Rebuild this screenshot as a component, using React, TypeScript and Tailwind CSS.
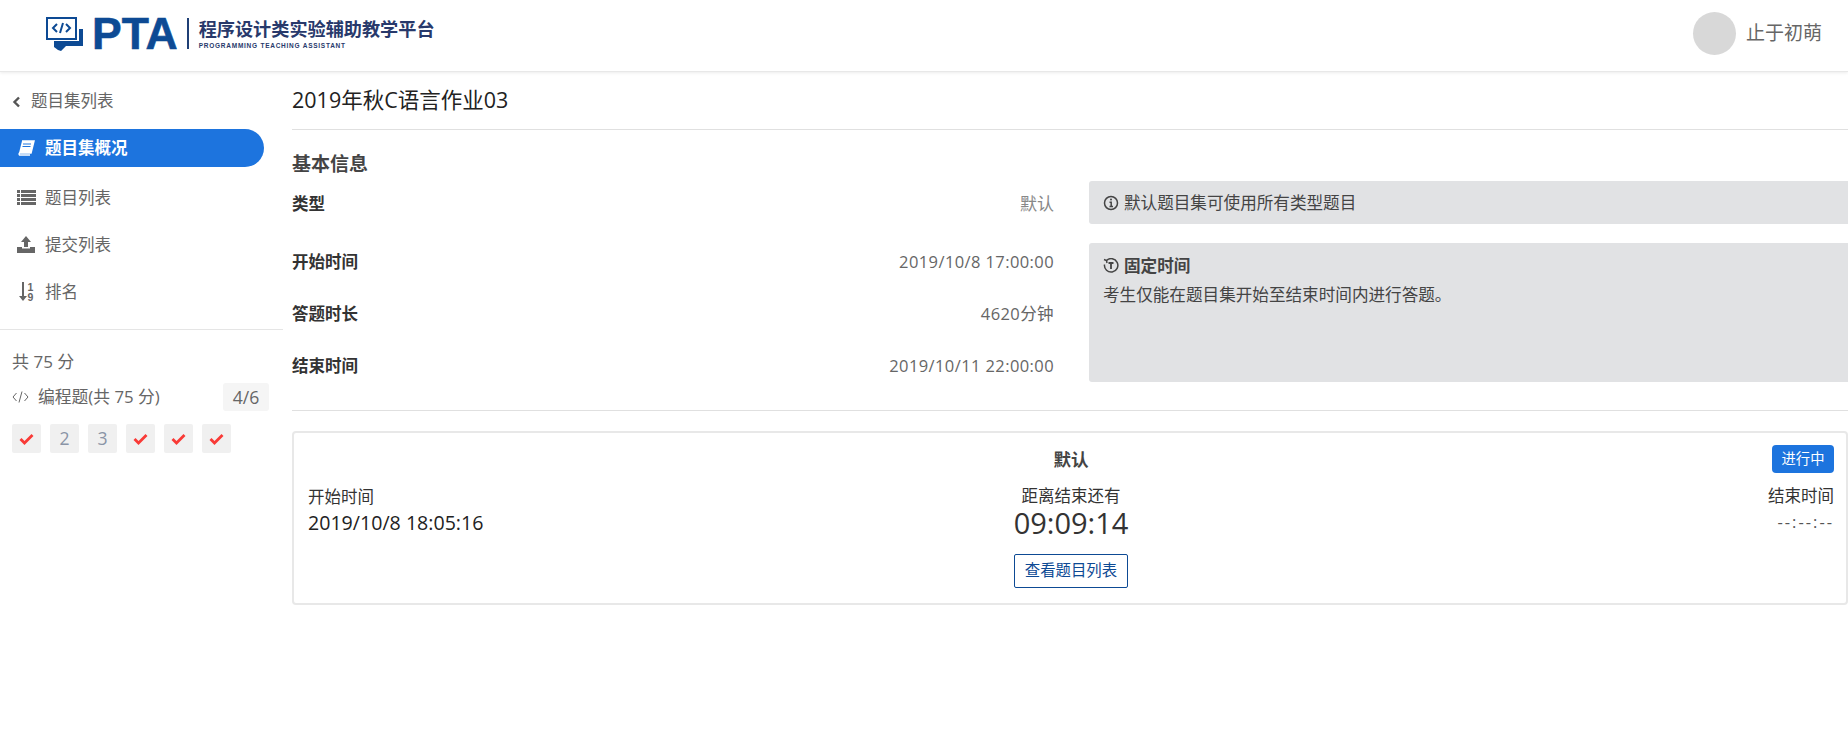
const font = "font-['Open_Sans','Noto_Sans_CJK_SC',sans-serif]";

function LogoMark() {
  return (
    <svg width="37" height="34" viewBox="0 0 37 34" className="shrink-0">
      <rect x="1" y="1" width="29" height="21" fill="#fff" stroke="#0d4a94" strokeWidth="2" />
      <path d="M11 7l-4 4 4 4M20 7l4 4-4 4M17 6l-3 10" fill="none" stroke="#0d4a94" strokeWidth="2" />
      <path d="M8 24h21l4 0V12h4v17H20l-5 5-3-1-4-3z" fill="#0d4a94" />
    </svg>
  );
}

function Logo() {
  return (
    <div className="flex items-center">
      <LogoMark />
      <span className="ml-[9px] font-['Liberation_Sans',sans-serif] text-[44.5px] leading-[34px] font-bold text-[#0d4a94] [-webkit-text-stroke:0.6px_#0d4a94]">
        PTA
      </span>
      <div className="ml-[9px] h-[31px] w-[2px] bg-[#1f3f75]" />
      <div className="ml-[10px] flex flex-col">
        <span className="text-[18.15px] leading-[24px] font-bold text-[#28396b]">程序设计类实验辅助教学平台</span>
        <span className="font-['Liberation_Sans',sans-serif] text-[6.5px] leading-[9px] font-bold tracking-[0.75px] text-[#28396b]">
          PROGRAMMING TEACHING ASSISTANT
        </span>
      </div>
    </div>
  );
}

function Header() {
  return (
    <header className="flex h-[72px] items-center justify-between border-b border-[#e8e8e8] pb-[4px] pl-[46px] pr-[26px] shadow-[0_1px_3px_rgba(0,0,0,0.08)]">
      <Logo />
      <div className="flex items-center gap-[10px]">
        <div className="h-[43px] w-[43px] rounded-full bg-[#d8d8d8]" />
        <span className="text-[19px] text-[#666]">止于初萌</span>
      </div>
    </header>
  );
}

function BackIcon() {
  return (
    <svg width="9" height="12" viewBox="0 0 9 12" className="mr-[10px]">
      <path d="M7 1.500L2.500 6 7 10.500" fill="none" stroke="#555" strokeWidth="2.400" />
    </svg>
  );
}

function BookIcon() {
  return (
    <svg width="18" height="16" viewBox="0 0 18 16">
      <path d="M5 1h12l-3 12H2.500a1.500 1.500 0 0 0 0 2H13" fill="none" stroke="#fff" strokeWidth="1.500" />
      <path d="M5 1h12l-3 12H2z" fill="#fff" />
      <path d="M6 4h8M5.500 6.500h8" stroke="#1d74de" strokeWidth="1" />
    </svg>
  );
}

function ListIcon() {
  return (
    <svg width="19" height="15" viewBox="0 0 19 15" fill="#666">
      <path d="M0 0h3v3H0zM4 0h15v3H4zM0 4h3v3H0zM4 4h15v3H4zM0 8h3v3H0zM4 8h15v3H4zM0 12h3v3H0zM4 12h15v3H4z" />
    </svg>
  );
}

function UploadIcon() {
  return (
    <svg width="18" height="17" viewBox="0 0 18 17" fill="#666">
      <path d="M9 0l5 6h-3v5H7V6H4z" />
      <path d="M0 11h5v1.500h8V11h5v6H0z" />
    </svg>
  );
}

function SortIcon() {
  return (
    <div className="flex items-center">
      <svg width="8" height="19" viewBox="0 0 8 19" fill="#666">
        <path d="M3 0h2v14h3l-4 5-4-5h3z" />
      </svg>
      <div className="ml-[1px] flex flex-col font-['Liberation_Sans',sans-serif] text-[10.5px] leading-[10px] font-bold text-[#666]">
        <span>1</span>
        <span>9</span>
      </div>
    </div>
  );
}

function CodeIcon() {
  return (
    <svg width="17" height="12" viewBox="0 0 17 12" fill="none" stroke="#666" strokeWidth="1">
      <path d="M4.500 2L1 6l3.500 4M12.500 2L16 6l-3.500 4M10 .5L7 11.500" />
    </svg>
  );
}

function TimeIcon() {
  return (
    <svg width="16" height="16" viewBox="0 0 16 16" fill="none" stroke="#444" strokeWidth="1.500">
      <path d="M3.500 2.500A6.700 6.700 0 1 1 1.500 6.500" />
      <path d="M1 1.500l2.500 1 .5 2.500" />
      <path d="M5.500 5h5M8 5v6" strokeWidth="1.800" />
    </svg>
  );
}

function InfoIcon() {
  return (
    <svg width="16" height="16" viewBox="0 0 16 16" fill="none" stroke="#444" strokeWidth="1.500">
      <circle cx="8" cy="8" r="6.500" />
      <path d="M6.500 7.200H8.200V11.500M6.500 11.500H10" />
      <circle cx="8" cy="4.600" r="1" fill="#444" stroke="none" />
    </svg>
  );
}

function CheckMark() {
  return (
    <svg width="15" height="12" viewBox="0 0 15 12">
      <path d="M1.500 6l4 4 8-8" fill="none" stroke="#f93a36" strokeWidth="2.800" />
    </svg>
  );
}

function NavItem({ icon, label }: { icon: React.ReactNode; label: string }) {
  return (
    <div className="flex h-[47px] items-center">
      <div className="flex w-[45px] justify-center pl-[7px]">{icon}</div>
      <span className="pt-[1px] text-[16.5px] text-[#666]">{label}</span>
    </div>
  );
}

function Sidebar() {
  const marks = ["check", "2", "3", "check", "check", "check"];
  return (
    <aside className="w-[283px] shrink-0">
      <div className="flex h-[57px] items-center pl-[12px] pt-[2px] text-[16.5px] text-[#666]">
        <BackIcon />
        <span>题目集列表</span>
      </div>
      <div className="flex h-[38px] w-[264px] items-center rounded-r-[19px] bg-[#1d74de]">
        <div className="flex w-[45px] justify-center pl-[7px]">
          <BookIcon />
        </div>
        <span className="pt-[1px] text-[16.5px] font-bold text-white">题目集概况</span>
      </div>
      <div className="mt-[7px] border-b border-[#e5e5e5] pb-[14px]">
        <NavItem icon={<ListIcon />} label="题目列表" />
        <NavItem icon={<UploadIcon />} label="提交列表" />
        <NavItem icon={<SortIcon />} label="排名" />
      </div>
      <div className="pl-[12px] pr-[14px] pt-[20px]">
        <div className="text-[17px] leading-[24px] text-[#666]">共 75 分</div>
        <div className="mt-[9px] flex items-center justify-between">
          <div className="flex items-center text-[#666]">
            <CodeIcon />
            <span className="ml-[9px] text-[16.8px]">编程题(共 75 分)</span>
          </div>
          <div className="flex h-[28px] w-[46px] items-center justify-center rounded-[3px] bg-[#f5f5f5] text-[17.6px] text-[#666]">
            4/6
          </div>
        </div>
        <div className="mt-[13px] flex gap-[9px]">
          {marks.map((m, i) => (
            <div
              key={i}
              className="flex h-[29px] w-[29px] items-center justify-center rounded-[2px] bg-[#f0f0f0] text-[17.6px] text-[#8a94a6]"
            >
              {m === "check" ? <CheckMark /> : m}
            </div>
          ))}
        </div>
      </div>
    </aside>
  );
}

function InfoRow({ label, value }: { label: string; value: string }) {
  return (
    <div className="flex h-[52px] items-center justify-between">
      <span className="text-[16.5px] font-bold text-[#333]">{label}</span>
      <span className="text-[16.5px] tracking-[0.4px] text-[#666]">{value}</span>
    </div>
  );
}

function Main() {
  return (
    <main className="ml-[9px] flex-1">
      <div className="flex h-[58px] items-center border-b border-[#e0e0e0] text-[21.5px] text-[#222]">
        2019年秋C语言作业03
      </div>
      <div className="flex h-[51px] items-center pt-[17px] text-[19px] font-bold text-[#444]">基本信息</div>
      <div className="flex border-b border-[#e0e0e0] pb-[18px]">
        <div className="w-[762px] shrink-0">
          <div className="flex h-[43px] items-center justify-between pt-[3px]">
            <span className="text-[16.5px] font-bold text-[#333]">类型</span>
            <span className="text-[17px] text-[#888]">默认</span>
          </div>
          <div className="mt-[12px]">
            <InfoRow label="开始时间" value="2019/10/8 17:00:00" />
            <InfoRow label="答题时长" value="4620分钟" />
            <InfoRow label="结束时间" value="2019/10/11 22:00:00" />
          </div>
        </div>
        <div className="ml-[35px] flex-1">
          <div className="flex h-[43px] items-center gap-[5px] rounded-l-[3px] bg-[#e1e2e4] pl-[14px] pt-[1px] text-[16.6px] text-[#444]">
            <InfoIcon />
            默认题目集可使用所有类型题目
          </div>
          <div className="mt-[19px] h-[139px] rounded-l-[3px] bg-[#e1e2e4] pl-[14px] pt-[9px] text-[16.6px] text-[#444]">
            <div className="flex h-[28px] items-center gap-[5px] font-bold">
              <TimeIcon />
              固定时间
            </div>
            <div className="leading-[30px]">考生仅能在题目集开始至结束时间内进行答题。</div>
          </div>
        </div>
      </div>
      <div className="mt-[20px] grid h-[174px] grid-cols-[1fr_auto_1fr] rounded-[4px] border-2 border-[#e8e8e8] pl-[14px] pr-[12px] text-[16.5px] text-[#333]">
        <div className="pt-[51px]">
          <div className="h-[26px] leading-[26px]">开始时间</div>
          <div className="text-[19.6px] leading-[26px] text-[#222]">2019/10/8 18:05:16</div>
        </div>
        <div className="flex flex-col items-center pt-[13px]">
          <div className="h-[26px] text-[17.6px] leading-[26px] font-bold text-[#444]">默认</div>
          <div className="mt-[12px] h-[24px] leading-[24px]">距离结束还有</div>
          <div className="h-[30px] text-[29px] leading-[30px] text-[#333]">09:09:14</div>
          <div className="mt-[16px] flex h-[34px] w-[114px] items-center justify-center rounded-[2px] border border-[#0d4a94] text-[15.4px] text-[#0d4a94]">
            查看题目列表
          </div>
        </div>
        <div className="flex flex-col items-end pt-[12px]">
          <div className="flex h-[28px] w-[62px] items-center justify-center rounded-[4px] bg-[#1d74de] text-[14.3px] text-white">
            进行中
          </div>
          <div className="mt-[11px] h-[24px] leading-[24px]">结束时间</div>
          <div className="mt-[2px] tracking-[2px] text-[#555]">--:--:--</div>
        </div>
      </div>
    </main>
  );
}

export default function App() {
  return (
    <div className={`min-h-[738px] bg-white ${font}`}>
      <Header />
      <div className="flex">
        <Sidebar />
        <Main />
      </div>
    </div>
  );
}
